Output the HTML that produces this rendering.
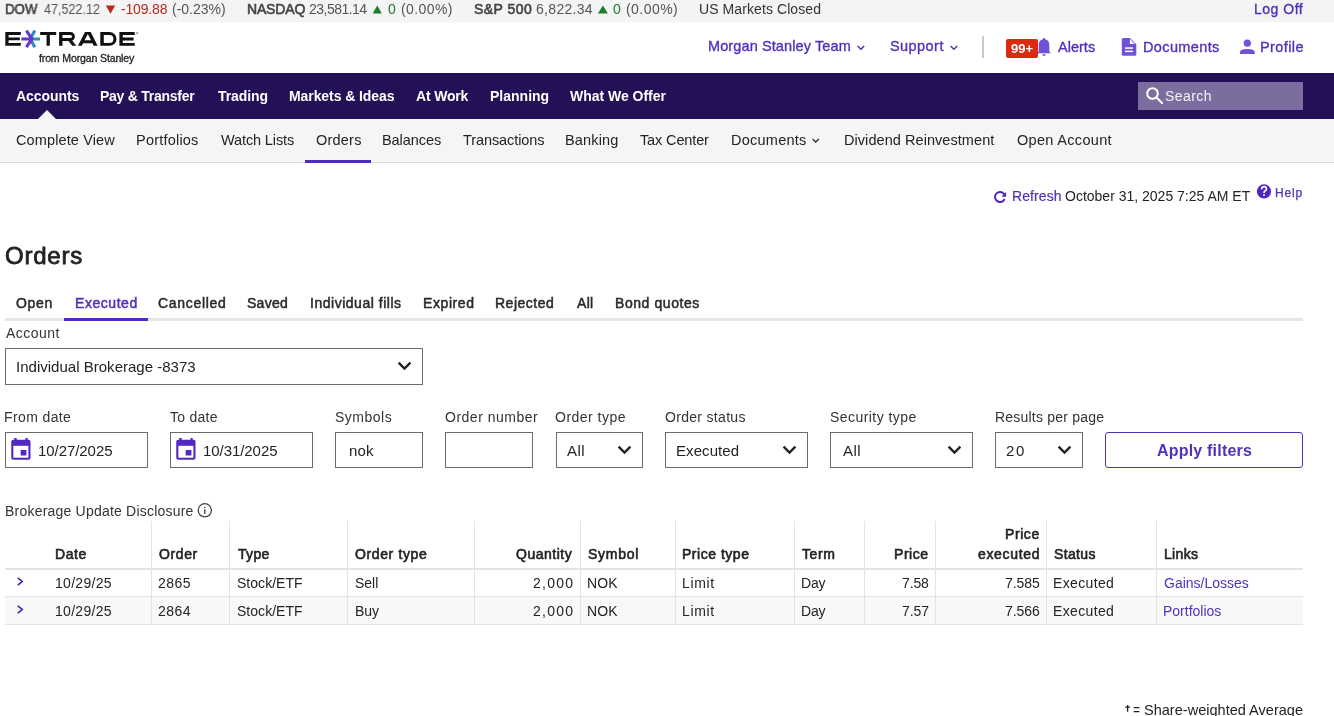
<!DOCTYPE html>
<html><head><meta charset="utf-8">
<style>
*{box-sizing:border-box;margin:0;padding:0}
html,body{width:1334px;height:716px;overflow:hidden;background:#fff}
body{font-family:"Liberation Sans",sans-serif;position:relative}
.t{position:absolute;white-space:nowrap;will-change:transform}
.r{position:absolute;display:block}
</style></head><body>
<div class="r" style="left:0px;top:0px;width:1334px;height:22px;background:#f4f4f4"></div>
<div class="r" style="left:0px;top:73px;width:1334px;height:46px;background:#241056"></div>
<div class="r" style="left:0px;top:119px;width:1334px;height:43px;background:#f5f5f5"></div>
<div class="r" style="left:0px;top:162px;width:1334px;height:1px;background:#dcdcdc"></div>
<div class="t" style="left:5.12px;top:2.15px;font-size:14px;line-height:14px;color:#444;-webkit-text-stroke:0.6px #444;transform:scaleX(0.9483);transform-origin:0 0;">DOW</div>
<div class="t" style="left:43.75px;top:2.15px;font-size:14px;line-height:14px;color:#555;transform:scaleX(0.8969);transform-origin:0 0;">47,522.12</div>
<svg class="r" style="left:105px;top:5px" width="11" height="9"><path d="M0.8 0.5 H10.2 L5.5 8.8 Z" fill="#b8281f"/></svg>
<div class="t" style="left:121.37px;top:2.15px;font-size:14px;line-height:14px;color:#b8281f;letter-spacing:-0.162px;">-109.88</div>
<div class="t" style="left:171.86px;top:2.15px;font-size:14px;line-height:14px;color:#555;letter-spacing:-0.020px;">(-0.23%)</div>
<div class="t" style="left:246.98px;top:2.15px;font-size:14px;line-height:14px;color:#444;-webkit-text-stroke:0.6px #444;letter-spacing:-0.166px;">NASDAQ</div>
<div class="t" style="left:308.90px;top:2.15px;font-size:14px;line-height:14px;color:#555;letter-spacing:-0.522px;">23,581.14</div>
<svg class="r" style="left:372px;top:5px" width="11" height="9"><path d="M0.7 8.6 H9.8 L5.25 0.5 Z" fill="#1d7a2e"/></svg>
<div class="t" style="left:388.34px;top:2.15px;font-size:14px;line-height:14px;color:#1d7a2e;">0</div>
<div class="t" style="left:401.16px;top:2.15px;font-size:14px;line-height:14px;color:#555;letter-spacing:0.397px;">(0.00%)</div>
<div class="t" style="left:474.07px;top:2.15px;font-size:14px;line-height:14px;color:#444;-webkit-text-stroke:0.6px #444;letter-spacing:0.450px;">S&amp;P 500</div>
<div class="t" style="left:535.60px;top:2.15px;font-size:14px;line-height:14px;color:#555;letter-spacing:0.309px;">6,822.34</div>
<svg class="r" style="left:597px;top:5px" width="11" height="9"><path d="M0.9 8.6 H10.9 L5.9 0.5 Z" fill="#1d7a2e"/></svg>
<div class="t" style="left:613.44px;top:2.15px;font-size:14px;line-height:14px;color:#1d7a2e;">0</div>
<div class="t" style="left:625.56px;top:2.15px;font-size:14px;line-height:14px;color:#555;letter-spacing:0.447px;">(0.00%)</div>
<div class="t" style="left:698.95px;top:2.15px;font-size:14px;line-height:14px;color:#333;letter-spacing:0.084px;">US Markets Closed</div>
<div class="t" style="left:1254.06px;top:2.15px;font-size:14px;line-height:14px;color:#5231bb;-webkit-text-stroke:0.35px #5231bb;letter-spacing:0.510px;">Log Off</div>
<svg class="r" style="left:0;top:24px" width="150" height="46" viewBox="0 0 150 46">
<g fill="#111" fill-rule="evenodd">
<path d="M5.3 8 H20.8 V10.9 H8.6 V13.4 H19.8 V16.3 H8.6 V18.9 H20.8 V21.8 H5.3 Z"/>
<path d="M40.2 8 H56.2 V10.9 H49.85 V21.8 H46.55 V10.9 H40.2 Z"/>
<rect x="59.1" y="8" width="3.4" height="13.8"/>
<path d="M68 16.2 H72 L76.3 21.8 H72.2 Z"/>
<path d="M78 21.8 L85 8 H90.7 L97.6 21.8 H93.8 L92.5 19.2 H83.12 L81.8 21.8 Z M84.59 16.3 H91.05 L87.84 9.88 Z"/>
<path d="M100.3 8 H109.6 A6.9 6.9 0 0 1 109.6 21.8 H100.3 Z M103.8 10.9 H109.4 A4 4 0 0 1 109.4 18.9 H103.8 Z"/>
<path d="M119.4 8 H134.7 V10.9 H122.8 V13.6 H133.6 V16.5 H122.8 V18.9 H134.7 V21.8 H119.4 Z"/>
</g>
<path d="M61 9.45 H70.4 A3.05 3.05 0 0 1 70.4 15.55 H61" fill="none" stroke="#111" stroke-width="2.9"/>
<g fill="none" stroke-width="3.1" stroke-linecap="butt">
<path d="M34.8 6.6 L30.3 14.9 L34.8 23.2 M31.5 14.95 H40" stroke="#2f8cc0"/>
<path d="M26.4 6.6 L31.9 14.9 L26.4 23.2 M21.4 14.95 H31.5" stroke="#6236c8"/>
</g>
<circle cx="137.2" cy="9.2" r="1.1" fill="#999"/>
</svg>
<div class="t" style="left:39.39px;top:52.73px;font-size:10.6px;line-height:10.6px;color:#222;-webkit-text-stroke:0.3px #222;letter-spacing:-0.167px;">from Morgan Stanley</div>
<div class="t" style="left:708.01px;top:38.93px;font-size:14.5px;line-height:14.5px;color:#5231bb;-webkit-text-stroke:0.35px #5231bb;letter-spacing:0.109px;">Morgan Stanley Team</div>
<svg class="r" style="left:856px;top:44px" width="10" height="8"><path d="M1.6 2 L4.9 5.3 L8.2 2" fill="none" stroke="#5231bb" stroke-width="1.5"/></svg>
<div class="t" style="left:889.52px;top:38.93px;font-size:14.5px;line-height:14.5px;color:#5231bb;-webkit-text-stroke:0.35px #5231bb;letter-spacing:0.438px;">Support</div>
<svg class="r" style="left:949px;top:44px" width="10" height="8"><path d="M1.6 2 L4.9 5.3 L8.2 2" fill="none" stroke="#5231bb" stroke-width="1.5"/></svg>
<div class="r" style="left:982px;top:36px;width:2px;height:22px;background:#c8c8c8"></div>
<div class="r" style="left:1006px;top:39px;width:32px;height:19px;background:#dc2a0e;border-radius:2px"></div>
<div class="t" style="left:1011.31px;top:42.00px;font-size:13px;line-height:13px;color:#fff;font-weight:bold;">99+</div>
<svg class="r" style="left:1036px;top:37px" width="16" height="20" viewBox="0 0 16 20"><path d="M8 1 Q9.2 1 9.2 2.3 Q13.3 3.3 13.3 8 V14.5 L15 16.3 H1 L2.7 14.5 V8 Q2.7 3.3 6.8 2.3 Q6.8 1 8 1 Z M6.2 17.3 H9.8 Q9.8 19 8 19 Q6.2 19 6.2 17.3 Z" fill="#7151d6"/></svg>
<div class="t" style="left:1058.17px;top:39.83px;font-size:14.5px;line-height:14.5px;color:#5231bb;-webkit-text-stroke:0.35px #5231bb;letter-spacing:0.022px;">Alerts</div>
<svg class="r" style="left:1121px;top:37px" width="16" height="20" viewBox="0 0 16 20"><path d="M2.3 0.9 H8.9 L15.3 7.3 V17.2 Q15.3 18.7 13.8 18.7 H2.3 Q0.8 18.7 0.8 17.2 V2.4 Q0.8 0.9 2.3 0.9 Z" fill="#7151d6"/><path d="M8.9 2.1 V6.9 H13.8 Z" fill="#fff"/><rect x="4" y="10.3" width="8" height="1.5" fill="#fff"/><rect x="4" y="13.6" width="8" height="1.5" fill="#fff"/></svg>
<div class="t" style="left:1143.02px;top:39.83px;font-size:14.5px;line-height:14.5px;color:#5231bb;-webkit-text-stroke:0.35px #5231bb;letter-spacing:0.368px;">Documents</div>
<svg class="r" style="left:1238px;top:37px" width="18" height="19" viewBox="0 0 18 19"><circle cx="9.3" cy="6.2" r="3.6" fill="#7151d6"/><path d="M2 17.1 V15.3 Q2 12 9.3 12 Q16.7 12 16.7 15.3 V17.1 Z" fill="#7151d6"/></svg>
<div class="t" style="left:1259.82px;top:39.83px;font-size:14.5px;line-height:14.5px;color:#5231bb;-webkit-text-stroke:0.35px #5231bb;letter-spacing:0.393px;">Profile</div>
<div class="t" style="left:16.25px;top:89.35px;font-size:14px;line-height:14px;color:#fff;font-weight:bold;letter-spacing:-0.066px;">Accounts</div>
<div class="t" style="left:100.49px;top:89.35px;font-size:14px;line-height:14px;color:#fff;font-weight:bold;letter-spacing:-0.258px;">Pay &amp; Transfer</div>
<div class="t" style="left:217.86px;top:89.35px;font-size:14px;line-height:14px;color:#fff;font-weight:bold;letter-spacing:-0.082px;">Trading</div>
<div class="t" style="left:288.99px;top:89.35px;font-size:14px;line-height:14px;color:#fff;font-weight:bold;letter-spacing:-0.081px;">Markets &amp; Ideas</div>
<div class="t" style="left:416.05px;top:89.35px;font-size:14px;line-height:14px;color:#fff;font-weight:bold;letter-spacing:-0.177px;">At Work</div>
<div class="t" style="left:489.59px;top:89.35px;font-size:14px;line-height:14px;color:#fff;font-weight:bold;letter-spacing:0.006px;">Planning</div>
<div class="t" style="left:570.30px;top:89.35px;font-size:14px;line-height:14px;color:#fff;font-weight:bold;letter-spacing:-0.022px;">What We Offer</div>
<svg class="r" style="left:38px;top:110px" width="18" height="9"><path d="M0 9 L9 0 L18 9 Z" fill="#f5f5f5"/></svg>
<div class="r" style="left:1138px;top:82px;width:165px;height:28px;background:#7b6d9e"></div>
<svg class="r" style="left:1143px;top:85px" width="22" height="22" viewBox="0 0 22 22"><circle cx="9.5" cy="8.5" r="5.3" fill="none" stroke="#fff" stroke-width="2"/><path d="M13.3 12.3 L19 18" stroke="#fff" stroke-width="2.2" stroke-linecap="round"/></svg>
<div class="t" style="left:1165.37px;top:89.15px;font-size:14px;line-height:14px;color:#f4f2f8;letter-spacing:0.446px;">Search</div>
<div class="t" style="left:15.78px;top:133.33px;font-size:14.5px;line-height:14.5px;color:#232323;letter-spacing:0.119px;">Complete View</div>
<div class="t" style="left:136.14px;top:133.33px;font-size:14.5px;line-height:14.5px;color:#232323;letter-spacing:0.211px;">Portfolios</div>
<div class="t" style="left:220.73px;top:133.33px;font-size:14.5px;line-height:14.5px;color:#232323;letter-spacing:-0.120px;">Watch Lists</div>
<div class="t" style="left:315.55px;top:133.33px;font-size:14.5px;line-height:14.5px;color:#232323;letter-spacing:0.213px;">Orders</div>
<div class="t" style="left:381.64px;top:133.33px;font-size:14.5px;line-height:14.5px;color:#232323;letter-spacing:-0.057px;">Balances</div>
<div class="t" style="left:462.81px;top:133.33px;font-size:14.5px;line-height:14.5px;color:#232323;letter-spacing:-0.092px;">Transactions</div>
<div class="t" style="left:565.44px;top:133.33px;font-size:14.5px;line-height:14.5px;color:#232323;letter-spacing:0.148px;">Banking</div>
<div class="t" style="left:640.31px;top:133.33px;font-size:14.5px;line-height:14.5px;color:#232323;letter-spacing:-0.133px;">Tax Center</div>
<div class="t" style="left:731.14px;top:133.33px;font-size:14.5px;line-height:14.5px;color:#232323;letter-spacing:0.250px;">Documents</div>
<div class="t" style="left:844.24px;top:133.33px;font-size:14.5px;line-height:14.5px;color:#232323;letter-spacing:0.059px;">Dividend Reinvestment</div>
<div class="t" style="left:1016.55px;top:133.33px;font-size:14.5px;line-height:14.5px;color:#232323;letter-spacing:0.315px;">Open Account</div>
<svg class="r" style="left:811px;top:137px" width="10" height="8"><path d="M1.6 2 L4.75 5.1 L7.9 2" fill="none" stroke="#333" stroke-width="1.4"/></svg>
<div class="r" style="left:305px;top:160px;width:66px;height:3px;background:#5228c4"></div>
<svg class="r" style="left:992px;top:189px" width="16" height="16" viewBox="0 0 16 16"><path d="M12.2 5.3 A5 5 0 1 0 12.6 10.0" fill="none" stroke="#4e22bf" stroke-width="1.9"/><path d="M14.1 2.9 V7.7 H9.4 Z" fill="#4e22bf"/></svg>
<div class="t" style="left:1011.58px;top:189.45px;font-size:14px;line-height:14px;color:#5231bb;-webkit-text-stroke:0.2px #5231bb;letter-spacing:0.088px;">Refresh</div>
<div class="t" style="left:1064.77px;top:189.45px;font-size:14px;line-height:14px;color:#232323;">October 31, 2025 7:25 AM ET</div>
<svg class="r" style="left:1256px;top:183px" width="16" height="16" viewBox="0 0 16 16"><circle cx="8" cy="8.4" r="7.1" fill="#5126c6"/><path d="M5.6 6.2 Q5.6 3.7 8 3.7 Q10.4 3.7 10.4 6 Q10.4 7.3 9 8.1 Q8 8.7 8 10" fill="none" stroke="#fff" stroke-width="1.7"/><rect x="7.1" y="11.3" width="1.8" height="1.6" fill="#fff"/></svg>
<div class="t" style="left:1274.87px;top:187.24px;font-size:12px;line-height:12px;color:#5231bb;-webkit-text-stroke:0.25px #5231bb;letter-spacing:0.843px;">Help</div>
<div class="t" style="left:5.22px;top:243.58px;font-size:24px;line-height:24px;color:#232323;-webkit-text-stroke:0.8px #232323;letter-spacing:0.760px;">Orders</div>
<div class="t" style="left:16.32px;top:296.15px;font-size:14px;line-height:14px;color:#2a2a2a;-webkit-text-stroke:0.5px #2a2a2a;letter-spacing:0.703px;">Open</div>
<div class="t" style="left:74.73px;top:296.15px;font-size:14px;line-height:14px;color:#5231bb;-webkit-text-stroke:0.5px #5231bb;letter-spacing:0.550px;">Executed</div>
<div class="t" style="left:158.25px;top:296.15px;font-size:14px;line-height:14px;color:#2a2a2a;-webkit-text-stroke:0.5px #2a2a2a;letter-spacing:0.685px;">Cancelled</div>
<div class="t" style="left:247.32px;top:296.15px;font-size:14px;line-height:14px;color:#2a2a2a;-webkit-text-stroke:0.5px #2a2a2a;letter-spacing:0.263px;">Saved</div>
<div class="t" style="left:309.99px;top:296.15px;font-size:14px;line-height:14px;color:#2a2a2a;-webkit-text-stroke:0.5px #2a2a2a;letter-spacing:0.521px;">Individual fills</div>
<div class="t" style="left:422.83px;top:296.15px;font-size:14px;line-height:14px;color:#2a2a2a;-webkit-text-stroke:0.5px #2a2a2a;letter-spacing:0.595px;">Expired</div>
<div class="t" style="left:495.33px;top:296.15px;font-size:14px;line-height:14px;color:#2a2a2a;-webkit-text-stroke:0.5px #2a2a2a;letter-spacing:0.514px;">Rejected</div>
<div class="t" style="left:577.25px;top:296.15px;font-size:14px;line-height:14px;color:#2a2a2a;-webkit-text-stroke:0.5px #2a2a2a;letter-spacing:0.335px;">All</div>
<div class="t" style="left:614.93px;top:296.15px;font-size:14px;line-height:14px;color:#2a2a2a;-webkit-text-stroke:0.5px #2a2a2a;letter-spacing:0.570px;">Bond quotes</div>
<div class="r" style="left:5px;top:318px;width:1298px;height:3px;background:#e6e6e6"></div>
<div class="r" style="left:64px;top:318px;width:84px;height:3px;background:#5228c4"></div>
<div class="t" style="left:5.80px;top:325.85px;font-size:14px;line-height:14px;color:#333;letter-spacing:0.455px;">Account</div>
<div class="r" style="left:5px;top:348px;width:418px;height:37px;border:1px solid #6b6b6b;background:#fff"></div>
<div class="t" style="left:15.95px;top:359.10px;font-size:15px;line-height:15px;color:#232323;letter-spacing:0.016px;">Individual Brokerage -8373</div>
<svg class="r" style="left:397px;top:361px" width="15" height="10" viewBox="0 0 15 10"><path d="M1.6 1.6 L7.5 7.5 L13.4 1.6" fill="none" stroke="#222" stroke-width="2.4"/></svg>
<div class="t" style="left:4.28px;top:409.95px;font-size:14px;line-height:14px;color:#333;letter-spacing:0.385px;">From date</div>
<div class="t" style="left:170.42px;top:409.95px;font-size:14px;line-height:14px;color:#333;letter-spacing:0.248px;">To date</div>
<div class="t" style="left:334.67px;top:409.95px;font-size:14px;line-height:14px;color:#333;letter-spacing:0.505px;">Symbols</div>
<div class="t" style="left:444.77px;top:409.95px;font-size:14px;line-height:14px;color:#333;letter-spacing:0.505px;">Order number</div>
<div class="t" style="left:555.17px;top:409.95px;font-size:14px;line-height:14px;color:#333;letter-spacing:0.490px;">Order type</div>
<div class="t" style="left:665.07px;top:409.95px;font-size:14px;line-height:14px;color:#333;letter-spacing:0.311px;">Order status</div>
<div class="t" style="left:829.87px;top:409.95px;font-size:14px;line-height:14px;color:#333;letter-spacing:0.445px;">Security type</div>
<div class="t" style="left:994.68px;top:409.95px;font-size:14px;line-height:14px;color:#333;letter-spacing:0.214px;">Results per page</div>
<div class="r" style="left:5px;top:432px;width:143px;height:36px;border:1px solid #6b6b6b;background:#fff"></div>
<div class="r" style="left:170px;top:432px;width:143px;height:36px;border:1px solid #6b6b6b;background:#fff"></div>
<div class="r" style="left:335px;top:432px;width:88px;height:36px;border:1px solid #6b6b6b;background:#fff"></div>
<div class="r" style="left:445px;top:432px;width:88px;height:36px;border:1px solid #6b6b6b;background:#fff"></div>
<div class="r" style="left:556px;top:432px;width:87px;height:36px;border:1px solid #6b6b6b;background:#fff"></div>
<div class="r" style="left:665px;top:432px;width:143px;height:36px;border:1px solid #6b6b6b;background:#fff"></div>
<div class="r" style="left:830px;top:432px;width:143px;height:36px;border:1px solid #6b6b6b;background:#fff"></div>
<div class="r" style="left:995px;top:432px;width:88px;height:36px;border:1px solid #6b6b6b;background:#fff"></div>
<svg class="r" style="left:10.5px;top:438px" width="20" height="22" viewBox="0 0 20 22"><rect x="0.25" y="1.8" width="19.25" height="20" rx="2" fill="#5327c6"/><rect x="2.35" y="7.8" width="15.05" height="11.9" fill="#fff"/><rect x="3.3" y="0" width="2.4" height="3" fill="#5327c6"/><rect x="14.5" y="0" width="2.2" height="3" fill="#5327c6"/><rect x="9.7" y="12" width="5.7" height="5.5" fill="#5327c6"/></svg>
<svg class="r" style="left:175.5px;top:438px" width="20" height="22" viewBox="0 0 20 22"><rect x="0.25" y="1.8" width="19.25" height="20" rx="2" fill="#5327c6"/><rect x="2.35" y="7.8" width="15.05" height="11.9" fill="#fff"/><rect x="3.3" y="0" width="2.4" height="3" fill="#5327c6"/><rect x="14.5" y="0" width="2.2" height="3" fill="#5327c6"/><rect x="9.7" y="12" width="5.7" height="5.5" fill="#5327c6"/></svg>
<div class="t" style="left:37.88px;top:443.00px;font-size:15px;line-height:15px;color:#232323;letter-spacing:-0.061px;">10/27/2025</div>
<div class="t" style="left:202.88px;top:443.00px;font-size:15px;line-height:15px;color:#232323;letter-spacing:-0.061px;">10/31/2025</div>
<div class="t" style="left:349.02px;top:443.00px;font-size:15px;line-height:15px;color:#232323;letter-spacing:0.162px;">nok</div>
<div class="t" style="left:567.20px;top:443.00px;font-size:15px;line-height:15px;color:#232323;letter-spacing:0.463px;">All</div>
<svg class="r" style="left:617px;top:445px" width="15" height="10" viewBox="0 0 15 10"><path d="M1.6 1.6 L7.5 7.5 L13.4 1.6" fill="none" stroke="#222" stroke-width="2.4"/></svg>
<div class="t" style="left:676.30px;top:443.00px;font-size:15px;line-height:15px;color:#232323;letter-spacing:0.075px;">Executed</div>
<svg class="r" style="left:781.5px;top:445px" width="15" height="10" viewBox="0 0 15 10"><path d="M1.6 1.6 L7.5 7.5 L13.4 1.6" fill="none" stroke="#222" stroke-width="2.4"/></svg>
<div class="t" style="left:842.80px;top:443.00px;font-size:15px;line-height:15px;color:#232323;letter-spacing:0.463px;">All</div>
<svg class="r" style="left:947px;top:445px" width="15" height="10" viewBox="0 0 15 10"><path d="M1.6 1.6 L7.5 7.5 L13.4 1.6" fill="none" stroke="#222" stroke-width="2.4"/></svg>
<div class="t" style="left:1006.05px;top:443.00px;font-size:15px;line-height:15px;color:#232323;letter-spacing:1.625px;">20</div>
<svg class="r" style="left:1057px;top:445px" width="15" height="10" viewBox="0 0 15 10"><path d="M1.6 1.6 L7.5 7.5 L13.4 1.6" fill="none" stroke="#222" stroke-width="2.4"/></svg>
<div class="r" style="left:1105px;top:432px;width:198px;height:36px;border:1.5px solid #5231bb;border-radius:3px;background:#fff"></div>
<div class="t" style="left:1157.20px;top:443.06px;font-size:16px;line-height:16px;color:#5231bb;font-weight:bold;letter-spacing:0.197px;">Apply filters</div>
<div class="t" style="left:4.58px;top:503.85px;font-size:14px;line-height:14px;color:#333;letter-spacing:0.212px;">Brokerage Update Disclosure</div>
<svg class="r" style="left:196px;top:502px" width="18" height="18" viewBox="0 0 18 18"><circle cx="8.8" cy="8.3" r="6.6" fill="none" stroke="#444" stroke-width="1.3"/><rect x="8.1" y="4.8" width="1.4" height="1.3" fill="#444"/><rect x="8.1" y="7.3" width="1.4" height="4.6" fill="#444"/></svg>
<div class="r" style="left:5px;top:597px;width:1298px;height:27px;background:#f8f8f8"></div>
<div class="r" style="left:5px;top:568px;width:1298px;height:2px;background:#e4e4e4"></div>
<div class="r" style="left:5px;top:596px;width:1298px;height:1px;background:#e4e4e4"></div>
<div class="r" style="left:5px;top:624px;width:1298px;height:1px;background:#e4e4e4"></div>
<div class="r" style="left:151px;top:521px;width:1px;height:104px;background:#e4e4e4"></div>
<div class="r" style="left:229px;top:521px;width:1px;height:104px;background:#e4e4e4"></div>
<div class="r" style="left:347px;top:521px;width:1px;height:104px;background:#e4e4e4"></div>
<div class="r" style="left:474px;top:521px;width:1px;height:104px;background:#e4e4e4"></div>
<div class="r" style="left:580px;top:521px;width:1px;height:104px;background:#e4e4e4"></div>
<div class="r" style="left:675px;top:521px;width:1px;height:104px;background:#e4e4e4"></div>
<div class="r" style="left:794px;top:521px;width:1px;height:104px;background:#e4e4e4"></div>
<div class="r" style="left:864px;top:521px;width:1px;height:104px;background:#e4e4e4"></div>
<div class="r" style="left:935px;top:521px;width:1px;height:104px;background:#e4e4e4"></div>
<div class="r" style="left:1046px;top:521px;width:1px;height:104px;background:#e4e4e4"></div>
<div class="r" style="left:1156px;top:521px;width:1px;height:104px;background:#e4e4e4"></div>
<div class="t" style="left:55.18px;top:547.25px;font-size:14px;line-height:14px;color:#232323;-webkit-text-stroke:0.6px #232323;letter-spacing:0.603px;">Date</div>
<div class="t" style="left:158.67px;top:547.25px;font-size:14px;line-height:14px;color:#232323;-webkit-text-stroke:0.6px #232323;letter-spacing:0.617px;">Order</div>
<div class="t" style="left:237.62px;top:547.25px;font-size:14px;line-height:14px;color:#232323;-webkit-text-stroke:0.6px #232323;letter-spacing:0.333px;">Type</div>
<div class="t" style="left:355.37px;top:547.25px;font-size:14px;line-height:14px;color:#232323;-webkit-text-stroke:0.6px #232323;letter-spacing:0.623px;">Order type</div>
<div class="t" style="left:516.37px;top:547.25px;font-size:14px;line-height:14px;color:#232323;-webkit-text-stroke:0.6px #232323;letter-spacing:0.511px;">Quantity</div>
<div class="t" style="left:587.87px;top:547.25px;font-size:14px;line-height:14px;color:#232323;-webkit-text-stroke:0.6px #232323;letter-spacing:0.724px;">Symbol</div>
<div class="t" style="left:682.38px;top:547.25px;font-size:14px;line-height:14px;color:#232323;-webkit-text-stroke:0.6px #232323;letter-spacing:0.524px;">Price type</div>
<div class="t" style="left:802.02px;top:547.25px;font-size:14px;line-height:14px;color:#232323;-webkit-text-stroke:0.6px #232323;letter-spacing:0.580px;">Term</div>
<div class="t" style="left:894.18px;top:547.25px;font-size:14px;line-height:14px;color:#232323;-webkit-text-stroke:0.6px #232323;letter-spacing:0.550px;">Price</div>
<div class="t" style="left:1005.18px;top:527.15px;font-size:14px;line-height:14px;color:#232323;-webkit-text-stroke:0.6px #232323;letter-spacing:0.575px;">Price</div>
<div class="t" style="left:978.14px;top:547.05px;font-size:14px;line-height:14px;color:#232323;-webkit-text-stroke:0.6px #232323;letter-spacing:0.661px;">executed</div>
<div class="t" style="left:1054.07px;top:547.25px;font-size:14px;line-height:14px;color:#232323;-webkit-text-stroke:0.6px #232323;letter-spacing:0.366px;">Status</div>
<div class="t" style="left:1163.68px;top:547.25px;font-size:14px;line-height:14px;color:#232323;-webkit-text-stroke:0.6px #232323;letter-spacing:0.330px;">Links</div>
<svg class="r" style="left:16px;top:577px" width="9" height="10" viewBox="0 0 9 10"><path d="M1.8 0.8 L6.2 4.5 L1.8 8.2" fill="none" stroke="#4020b0" stroke-width="1.6"/></svg>
<div class="t" style="left:54.95px;top:576.45px;font-size:14px;line-height:14px;color:#232323;letter-spacing:0.293px;">10/29/25</div>
<div class="t" style="left:158.30px;top:576.45px;font-size:14px;line-height:14px;color:#232323;letter-spacing:0.503px;">2865</div>
<div class="t" style="left:236.97px;top:576.45px;font-size:14px;line-height:14px;color:#232323;letter-spacing:0.035px;">Stock/ETF</div>
<div class="t" style="left:355.07px;top:576.45px;font-size:14px;line-height:14px;color:#232323;">Sell</div>
<div class="t" style="left:532.90px;top:576.45px;font-size:14px;line-height:14px;color:#232323;letter-spacing:1.248px;">2,000</div>
<div class="t" style="left:587.08px;top:576.45px;font-size:14px;line-height:14px;color:#232323;letter-spacing:0.125px;">NOK</div>
<div class="t" style="left:681.88px;top:576.45px;font-size:14px;line-height:14px;color:#232323;letter-spacing:0.638px;">Limit</div>
<div class="t" style="left:800.88px;top:576.45px;font-size:14px;line-height:14px;color:#232323;letter-spacing:-0.150px;">Day</div>
<div class="t" style="left:901.60px;top:576.45px;font-size:14px;line-height:14px;color:#232323;letter-spacing:-0.123px;">7.58</div>
<div class="t" style="left:1004.90px;top:576.45px;font-size:14px;line-height:14px;color:#232323;letter-spacing:-0.085px;">7.585</div>
<div class="t" style="left:1053.28px;top:576.45px;font-size:14px;line-height:14px;color:#232323;letter-spacing:0.350px;">Executed</div>
<div class="t" style="left:1163.80px;top:576.45px;font-size:14px;line-height:14px;color:#5231bb;">Gains/Losses</div>
<svg class="r" style="left:16px;top:605px" width="9" height="10" viewBox="0 0 9 10"><path d="M1.8 0.8 L6.2 4.5 L1.8 8.2" fill="none" stroke="#4020b0" stroke-width="1.6"/></svg>
<div class="t" style="left:54.95px;top:603.85px;font-size:14px;line-height:14px;color:#232323;letter-spacing:0.293px;">10/29/25</div>
<div class="t" style="left:158.30px;top:603.85px;font-size:14px;line-height:14px;color:#232323;letter-spacing:0.457px;">2864</div>
<div class="t" style="left:236.97px;top:603.85px;font-size:14px;line-height:14px;color:#232323;letter-spacing:0.035px;">Stock/ETF</div>
<div class="t" style="left:354.58px;top:603.85px;font-size:14px;line-height:14px;color:#232323;">Buy</div>
<div class="t" style="left:532.90px;top:603.85px;font-size:14px;line-height:14px;color:#232323;letter-spacing:1.248px;">2,000</div>
<div class="t" style="left:587.08px;top:603.85px;font-size:14px;line-height:14px;color:#232323;letter-spacing:0.125px;">NOK</div>
<div class="t" style="left:681.88px;top:603.85px;font-size:14px;line-height:14px;color:#232323;letter-spacing:0.638px;">Limit</div>
<div class="t" style="left:800.88px;top:603.85px;font-size:14px;line-height:14px;color:#232323;letter-spacing:-0.150px;">Day</div>
<div class="t" style="left:901.60px;top:603.85px;font-size:14px;line-height:14px;color:#232323;letter-spacing:-0.077px;">7.57</div>
<div class="t" style="left:1004.90px;top:603.85px;font-size:14px;line-height:14px;color:#232323;letter-spacing:-0.085px;">7.566</div>
<div class="t" style="left:1053.28px;top:603.85px;font-size:14px;line-height:14px;color:#232323;letter-spacing:0.350px;">Executed</div>
<div class="t" style="left:1163.38px;top:603.85px;font-size:14px;line-height:14px;color:#5231bb;">Portfolios</div>
<div class="t" style="left:1143.95px;top:702.63px;font-size:14.5px;line-height:14.5px;color:#232323;letter-spacing:0.021px;">Share-weighted Average</div>
<div class="t" style="left:1133.30px;top:703.05px;font-size:14px;line-height:14px;color:#232323;transform:scaleX(0.85);transform-origin:0 0;">=</div>
<svg class="r" style="left:1124px;top:704px" width="8" height="9" viewBox="0 0 8 9"><path d="M3.6 1 V7.8 M1.2 3.2 H6.1" stroke="#232323" stroke-width="1.3"/></svg>
</body></html>
